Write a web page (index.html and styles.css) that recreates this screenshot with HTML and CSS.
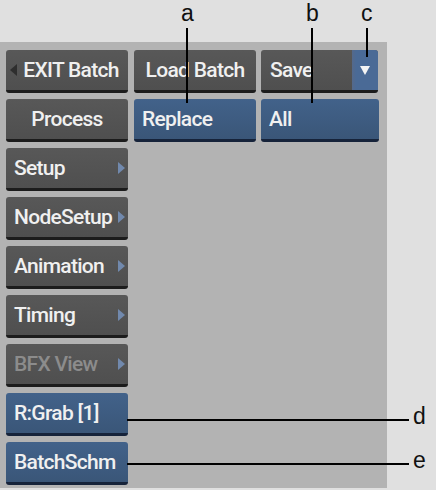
FILE: index.html
```html
<!DOCTYPE html>
<html>
<head>
<meta charset="utf-8">
<link rel="stylesheet" href="styles.css">
</head>
<body>
<div class="page">
  <div class="header"></div>
  <div class="panel">
    <div class="row">
      <div class="btn gray center exit"><span class="larrow"></span>EXIT Batch</div>
      <div class="btn gray center">Load Batch</div>
      <div class="btn gray save"><span class="save-label">Save</span><span class="drop"><span class="darrow"></span></span></div>
    </div>
    <div class="row">
      <div class="btn gray center">Process</div>
      <div class="btn blue">Replace</div>
      <div class="btn blue wide3">All</div>
    </div>
    <div class="btn gray sub">Setup<span class="rarrow"></span></div>
    <div class="btn gray sub">NodeSetup<span class="rarrow"></span></div>
    <div class="btn gray sub">Animation<span class="rarrow"></span></div>
    <div class="btn gray sub">Timing<span class="rarrow"></span></div>
    <div class="btn gray sub dim">BFX View<span class="rarrow"></span></div>
    <div class="btn blue">R:Grab [1]</div>
    <div class="btn blue">BatchSchm</div>
  </div>

  <span class="label la">a</span>
  <span class="label lb">b</span>
  <span class="label lc">c</span>
  <span class="label ld">d</span>
  <span class="label le">e</span>
  <span class="vline va"></span>
  <span class="vline vb"></span>
  <span class="vline vc"></span>
  <span class="hline hd"></span>
  <span class="hline he"></span>
</div>
</body>
</html>
```
FILE: styles.css
```css
html, body {
  margin: 0;
  padding: 0;
  background: #e0e0e0;
}
.page {
  position: relative;
  width: 436px;
  height: 490px;
  overflow: hidden;
}
.header {
  height: 42px;
}
.panel {
  width: 387px;
  height: 446px;
  box-sizing: border-box;
  background: #b3b3b3;
  padding: 8px 0 0 6px;
  display: flex;
  flex-direction: column;
  gap: 6px;
}
.row {
  display: flex;
  gap: 6px;
}
.row .wide3 {
  width: 118px;
  margin-left: -1px;
}
.btn {
  position: relative;
  width: 122px;
  height: 43px;
  box-sizing: border-box;
  border-radius: 3px;
  border-bottom: 3px solid #1c1c1c;
  display: flex;
  align-items: center;
  padding: 0 0 1px 8px;
  font-family: Roboto, "Liberation Sans", Arial, sans-serif;
  font-weight: 500;
  font-size: 21px;
  letter-spacing: -0.7px;
  color: #f0f0f0;
  white-space: nowrap;
}
.gray {
  background: linear-gradient(#585858, #4f4f4f);
}
.blue {
  background: linear-gradient(#42628a, #3a5678);
  border-bottom-color: #16233a;
}
.center {
  justify-content: center;
  padding-left: 0;
}
.exit {
  padding-left: 8px;
}
.larrow {
  position: absolute;
  left: 4px;
  top: 14px;
  width: 0;
  height: 0;
  border-top: 6px solid transparent;
  border-bottom: 6px solid transparent;
  border-right: 7px solid #2e2e2e;
}
.sub {
  padding-left: 8px;
}
.rarrow {
  position: absolute;
  left: 112px;
  top: 14px;
  width: 0;
  height: 0;
  border-top: 6px solid transparent;
  border-bottom: 6px solid transparent;
  border-left: 7px solid #7189ad;
}
.dim {
  color: #8c8c8c;
}
.save {
  width: 117px;
  margin-left: -1px;
  padding: 0;
  overflow: hidden;
}
.save-label {
  flex: 1;
  padding-left: 9px;
  padding-bottom: 1px;
}
.drop {
  align-self: stretch;
  width: 26px;
  background: linear-gradient(90deg, #55698a 0, #4a6a96 4px, #4a6a96 100%);
  display: flex;
  align-items: center;
  justify-content: center;
}
.darrow {
  width: 0;
  height: 0;
  border-left: 5px solid transparent;
  border-right: 5px solid transparent;
  border-top: 9px solid #f4f4f4;
  margin-top: 1px;
}
.label {
  position: absolute;
  font-family: "Liberation Sans", Arial, sans-serif;
  font-size: 23px;
  line-height: 23px;
  color: #111;
}
.la { left: 181px; top: 2px; }
.lb { left: 306px; top: 2px; }
.lc { left: 361px; top: 2px; }
.ld { left: 413px; top: 405px; }
.le { left: 413px; top: 449px; }
.vline {
  position: absolute;
  width: 2px;
  background: #000;
  top: 28px;
}
.va { left: 186px; height: 75px; }
.vb { left: 311px; height: 75px; }
.vc { left: 366px; height: 29px; }
.hline {
  position: absolute;
  height: 2px;
  background: #000;
  left: 127px;
  width: 282px;
}
.hd { top: 419px; }
.he { top: 463px; }
```
